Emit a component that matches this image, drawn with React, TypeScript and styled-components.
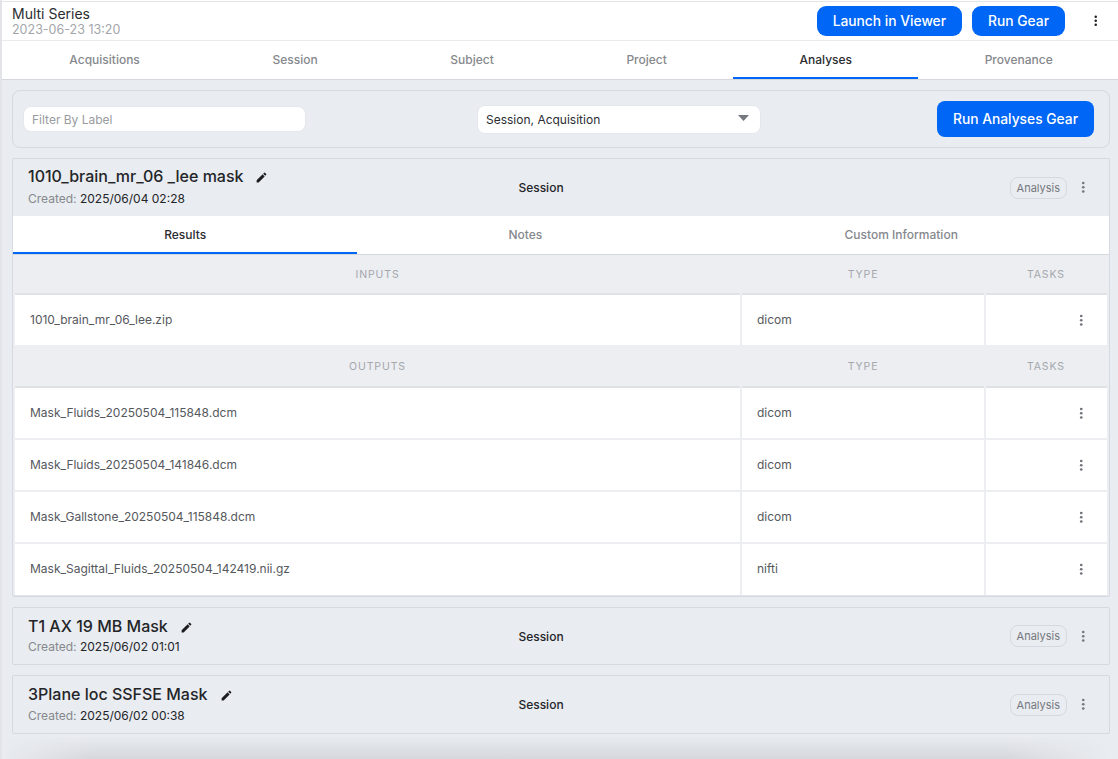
import { FunctionComponent } from "react";
import styled, { createGlobalStyle } from "styled-components";

const GlobalStyle = createGlobalStyle`
    html, body {
        margin: 0;
        padding: 0;
        height: 759px;
        overflow: hidden;
        background-color: #ffffff;
    }

    body {
        font-family: Inter, "Liberation Sans", sans-serif;
    }
`;

const Page = styled.div`
    width: 1118px;
    height: 759px;
    box-sizing: border-box;
    display: flex;
    flex-direction: column;
    padding-top: 1px;
    border-left: 2px solid #e2e4e8;
    background-color: #ffffff;
    overflow: hidden;
`;

const TopBar = styled.div`
    height: 40px;
    flex: none;
    box-sizing: border-box;
    display: flex;
    align-items: center;
    justify-content: space-between;
    padding: 0 12px 0 10px;
    background-color: #ffffff;
    border-top: 1px solid #e2e4e8;
    border-bottom: 1px solid #e8eaed;
`;

const TopTitle = styled.div`
    font-size: 14px;
    line-height: 16px;
    color: #2b2d31;
`;

const TopDate = styled.div`
    font-size: 12.5px;
    line-height: 15px;
    color: #a3a6ab;
`;

const TopActions = styled.div`
    display: flex;
    align-items: center;
    gap: 10px;
`;

const PrimaryButton = styled.button<{ $large?: boolean }>`
    height: ${p => (p.$large ? "36px" : "30px")};
    padding: 0 16px;
    border: none;
    border-radius: ${p => (p.$large ? "8px" : "9px")};
    background-color: #0066f5;
    color: #ffffff;
    font-family: inherit;
    font-size: 13.8px;
    font-weight: 500;
`;

const MenuButton = styled.div<{ $color: string; $size: number; $offset?: number }>`
    width: 20px;
    margin-left: ${p => p.$offset ?? 0}px;
    display: flex;
    justify-content: center;
    color: ${p => p.$color};

    svg {
        width: ${p => p.$size}px;
        height: ${p => p.$size}px;
        display: block;
    }
`;

const TabRow = styled.div<{ $nested?: boolean }>`
    height: 39px;
    flex: none;
    box-sizing: border-box;
    display: flex;
    padding-left: ${p => (p.$nested ? "0" : "1px")};
    margin-right: ${p => (p.$nested ? "0" : "-1px")};
    background-color: #ffffff;
    border-bottom: 1px solid #d4d7dc;
`;

const Tab = styled.div<{ $active?: boolean }>`
    flex: 1 1 auto;
    display: flex;
    align-items: center;
    justify-content: center;
    padding-bottom: 2px;
    font-size: 12px;
    font-weight: 500;
    color: ${p => (p.$active ? "#2b2d31" : "#85888d")};
    box-shadow: ${p => (p.$active ? "inset 0 -2px 0 #0066f5" : "none")};
`;

const Content = styled.div`
    flex: 1;
    min-height: 0;
    display: flex;
    flex-direction: column;
    gap: 10px;
    padding: 10px 8px 0 10px;
    background-color: #e9ecf0;
`;

const FilterPanel = styled.div`
    height: 58px;
    flex: none;
    box-sizing: border-box;
    display: grid;
    grid-template-columns: 283px 284px 1fr;
    column-gap: 171px;
    align-items: center;
    padding: 0 15px 0 10px;
    border: 1px solid #d5d9e2;
    border-radius: 8px;
`;

const FilterInput = styled.div`
    height: 26px;
    box-sizing: border-box;
    display: flex;
    align-items: center;
    padding: 0 8px;
    background-color: #ffffff;
    border: 1px solid #e4e7eb;
    border-radius: 8px;
    font-size: 12px;
    color: #989ba0;
`;

const FilterSelect = styled.div`
    height: 29px;
    box-sizing: border-box;
    display: flex;
    align-items: center;
    justify-content: space-between;
    padding: 0 11px 0 8px;
    background-color: #ffffff;
    border: 1px solid #e4e7eb;
    border-radius: 8px;
    font-size: 12px;
    color: #2b2d31;
`;

const RunButtonSlot = styled.div`
    justify-self: end;
`;

const Caret = styled.svg`
    width: 11px;
    height: 6px;
    display: block;
    margin-bottom: 3px;
`;

const Card = styled.div`
    flex: none;
    border: 1px solid #d5d9e2;
    border-radius: 2px;
`;

const CardHeader = styled.div<{ $height: number }>`
    height: ${p => p.$height}px;
    display: grid;
    grid-template-columns: 443px 140px 1fr;
    align-items: center;
    padding: 0 16px 0 15px;
`;

const TitleBlock = styled.div<{ $compact?: boolean }>`
    padding-bottom: ${p => (p.$compact ? "1.5px" : "3px")};
`;

const CardTitleRow = styled.div<{ $compact?: boolean }>`
    display: flex;
    align-items: center;
    gap: ${p => (p.$compact ? "12.5px" : "11px")};
    font-size: 16px;
    line-height: 20px;
    font-weight: 500;
    color: #232529;
`;

const EditIcon = styled.svg`
    width: 13px;
    height: 13px;
    display: block;
    margin-top: 3px;
`;

const CreatedLine = styled.div<{ $compact?: boolean }>`
    margin-top: ${p => (p.$compact ? "2.5px" : "4px")};
    font-size: 12px;
    line-height: 17px;
    color: #85888d;

    span {
        color: #232529;
    }
`;

const CardKind = styled.div`
    text-align: center;
    font-size: 12px;
    font-weight: 500;
    color: #232529;
`;

const CardActions = styled.div`
    display: flex;
    align-items: center;
    justify-content: flex-end;
    gap: 6px;
`;

const Badge = styled.div`
    height: 22px;
    box-sizing: border-box;
    display: flex;
    align-items: center;
    padding: 0 6px;
    border: 1px solid #d5d9e2;
    border-radius: 8px;
    font-size: 11px;
    color: #75787e;
`;

const FileTable = styled.div`
    display: grid;
    grid-template-columns: 725px 242px 121px;
    column-gap: 2px;
    padding: 0 2px 0 2px;
    background-color: #eceef2;
    border-bottom: 1px solid #e2e5ea;
`;

const HeadCell = styled.div<{ $height: number; $lowered?: boolean }>`
    height: ${p => p.$height}px;
    display: flex;
    align-items: center;
    justify-content: center;
    box-sizing: border-box;
    padding-top: ${p => (p.$lowered ? "2px" : "0")};
    border-bottom: 2px solid #dfe1e5;
    font-size: 10.5px;
    letter-spacing: 0.9px;
    color: #a4a7ac;
    text-transform: uppercase;
`;

const TaskHeadCell = styled(HeadCell)`
    justify-content: flex-end;
    padding-right: 42px;
`;

const BodyCell = styled.div<{ $height: number; $gap?: boolean }>`
    height: ${p => p.$height}px;
    box-sizing: border-box;
    margin-bottom: ${p => (p.$gap ? "2px" : "0")};
    display: flex;
    align-items: center;
    padding: 0 0 2px 15px;
    background-color: #ffffff;
    font-size: 12px;
    color: #55585d;
`;

const TaskCell = styled(BodyCell)`
    justify-content: flex-end;
    padding: 0 16px 0 0;
`;

const BottomFade = styled.div`
    flex: 1;
    min-height: 0;
    margin: -8px -8px 0 -10px;
    background: linear-gradient(180deg, rgba(196, 199, 204, 0) 0%, rgba(196, 199, 204, 0.55) 100%);
    mask-image: linear-gradient(90deg, transparent 0%, #000 8%, #000 90%, transparent 99%);
`;

const MoreVertical: FunctionComponent<{ color: string; size: number; offset?: number }> = ({ color, size, offset }) => (
    <MenuButton $color={color} $size={size} $offset={offset}>
        <svg viewBox="0 0 24 24" fill="currentColor">
            <circle cx="12" cy="5" r="2.2" />
            <circle cx="12" cy="12" r="2.2" />
            <circle cx="12" cy="19" r="2.2" />
        </svg>
    </MenuButton>
);

const Pencil = () => (
    <EditIcon viewBox="0 0 24 24" fill="#1c1d20">
        <path d="M3 17.25V21h3.75L17.81 9.94l-3.75-3.75L3 17.25zM20.71 7.04c.39-.39.39-1.02 0-1.41l-2.34-2.34a.9959.9959 0 0 0-1.41 0l-1.83 1.83 3.75 3.75 1.83-1.83z" />
    </EditIcon>
);

interface AnalysisHeaderProps {
    title: string;
    created: string;
    height: number;
    compact?: boolean;
}

const AnalysisHeader: FunctionComponent<AnalysisHeaderProps> = ({ title, created, height, compact }) => (
    <CardHeader $height={height}>
        <TitleBlock $compact={compact}>
            <CardTitleRow $compact={compact}>{title}<Pencil /></CardTitleRow>
            <CreatedLine $compact={compact}>Created: <span>{created}</span></CreatedLine>
        </TitleBlock>
        <CardKind>Session</CardKind>
        <CardActions>
            <Badge>Analysis</Badge>
            <MoreVertical color="#75787e" size={14.5} />
        </CardActions>
    </CardHeader>
);

const FileRow: FunctionComponent<{ name: string; type: string; height: number; gap?: boolean }> = ({ name, type, height, gap }) => (
    <>
        <BodyCell $height={height} $gap={gap}>{name}</BodyCell>
        <BodyCell $height={height} $gap={gap}>{type}</BodyCell>
        <TaskCell $height={height} $gap={gap}><MoreVertical color="#6f7278" size={14.5} /></TaskCell>
    </>
);

const TableHead: FunctionComponent<{ label: string; height: number; lowered?: boolean }> = ({ label, height, lowered }) => (
    <>
        <HeadCell $height={height} $lowered={lowered}>{label}</HeadCell>
        <HeadCell $height={height} $lowered={lowered}>Type</HeadCell>
        <TaskHeadCell $height={height} $lowered={lowered}>Tasks</TaskHeadCell>
    </>
);

const mainTabs = ["Acquisitions", "Session", "Subject", "Project", "Analyses", "Provenance"];
const resultTabs = ["Results", "Notes", "Custom Information"];

const outputs = [
    { name: "Mask_Fluids_20250504_115848.dcm", type: "dicom" },
    { name: "Mask_Fluids_20250504_141846.dcm", type: "dicom" },
    { name: "Mask_Gallstone_20250504_115848.dcm", type: "dicom" },
    { name: "Mask_Sagittal_Fluids_20250504_142419.nii.gz", type: "nifti" },
];

const App = () => (
    <Page>
        <GlobalStyle />
        <TopBar>
            <div>
                <TopTitle>Multi Series</TopTitle>
                <TopDate>2023-06-23 13:20</TopDate>
            </div>
            <TopActions>
                <PrimaryButton>Launch in Viewer</PrimaryButton>
                <PrimaryButton>Run Gear</PrimaryButton>
                <MoreVertical color="#1c1d20" size={13.5} offset={11} />
            </TopActions>
        </TopBar>
        <TabRow>
            {mainTabs.map(tab => <Tab key={tab} $active={tab === "Analyses"}>{tab}</Tab>)}
        </TabRow>
        <Content>
            <FilterPanel>
                <FilterInput>Filter By Label</FilterInput>
                <FilterSelect>
                    Session, Acquisition
                    <Caret viewBox="0 0 11 6"><path d="M0 0h11L5.5 6z" fill="#75787e" /></Caret>
                </FilterSelect>
                <RunButtonSlot>
                    <PrimaryButton $large>Run Analyses Gear</PrimaryButton>
                </RunButtonSlot>
            </FilterPanel>
            <Card>
                <AnalysisHeader title="1010_brain_mr_06 _lee mask" created="2025/06/04 02:28" height={57} />
                <TabRow $nested>
                    {resultTabs.map(tab => <Tab key={tab} $active={tab === "Results"}>{tab}</Tab>)}
                </TabRow>
                <FileTable>
                    <TableHead label="Inputs" height={40} />
                    <FileRow name="1010_brain_mr_06_lee.zip" type="dicom" height={50} />
                    <TableHead label="Outputs" height={43} lowered />
                    {outputs.map((file, index) => (
                        <FileRow key={file.name} name={file.name} type={file.type} height={index === 3 ? 51 : 50} gap={index < 3} />
                    ))}
                </FileTable>
            </Card>
            <Card>
                <AnalysisHeader title="T1 AX 19 MB Mask" created="2025/06/02 01:01" height={56} compact />
            </Card>
            <Card>
                <AnalysisHeader title="3Plane loc SSFSE Mask" created="2025/06/02 00:38" height={57} compact />
            </Card>
            <BottomFade />
        </Content>
    </Page>
);

export default App;
